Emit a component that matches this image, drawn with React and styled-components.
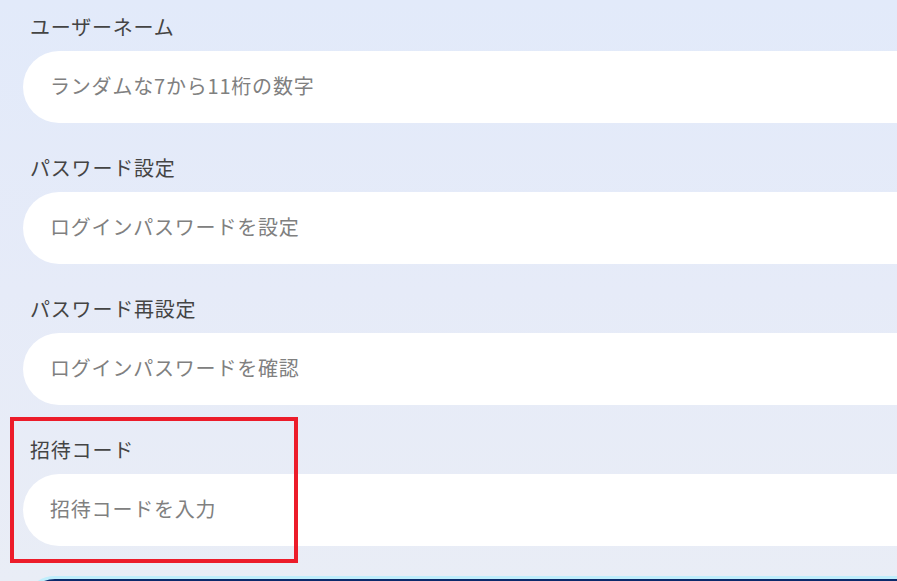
import React from "react";
import styled, { createGlobalStyle } from "styled-components";

const GlobalStyle = createGlobalStyle`
  html, body {
    margin: 0;
    padding: 0;
    overflow: hidden;
  }
  body {
    font-family: "Noto Sans CJK JP", "Noto Sans", sans-serif;
    background: linear-gradient(180deg, #e2eafa 0%, #e6ebf8 50%, #e9edf6 100%);
    min-height: 581px;
  }
`;

const fields = [
  { label: "ユーザーネーム", placeholder: "ランダムな7から11桁の数字" },
  { label: "パスワード設定", placeholder: "ログインパスワードを設定" },
  { label: "パスワード再設定", placeholder: "ログインパスワードを確認" },
  { label: "招待コード", placeholder: "招待コードを入力", marked: true },
];

const App = () => {
  return (
    <>
      <GlobalStyle />
      <Page>
        <Form>
          {fields.map((f) => (
            <Field key={f.label}>
              {f.marked && <Highlight />}
              <Label>{f.label}</Label>
              <Input type="text" placeholder={f.placeholder} />
            </Field>
          ))}
          <SubmitButton type="button" />
        </Form>
      </Page>
    </>
  );
};

const Page = styled.div`
  width: 897px;
  height: 581px;
  overflow: hidden;
`;

const Form = styled.div`
  width: 960px;
  padding-left: 23px;
  display: flex;
  flex-direction: column;
`;

const Field = styled.div`
  position: relative;
  display: flex;
  flex-direction: column;
  padding-top: 12px;
  margin-bottom: 18px;
`;

// 강조 표시용 빨간 테두리
const Highlight = styled.div`
  position: absolute;
  left: -13px;
  top: -6px;
  width: 280px;
  height: 138px;
  border: 4px solid #ec1c2a;
  pointer-events: none;
`;

const Label = styled.div`
  height: 30px;
  line-height: 30px;
  padding-left: 7px;
  margin-bottom: 9px;
  font-size: 20px;
  letter-spacing: 0.8px;
  color: #444;
`;

const Input = styled.input`
  height: 72px;
  box-sizing: border-box;
  border: none;
  outline: none;
  border-radius: 36px;
  background: #ffffff;
  padding: 0 0 4px 27px;
  font-family: inherit;
  font-size: 20px;
  letter-spacing: 0.8px;
  color: #333;

  &::placeholder {
    color: #808080;
  }
`;

const SubmitButton = styled.button`
  margin-top: 12px;
  height: 64px;
  border-radius: 36px;
  border: 3px solid #bfeefc;
  background: #0b2a6c;
`;

export default App;
